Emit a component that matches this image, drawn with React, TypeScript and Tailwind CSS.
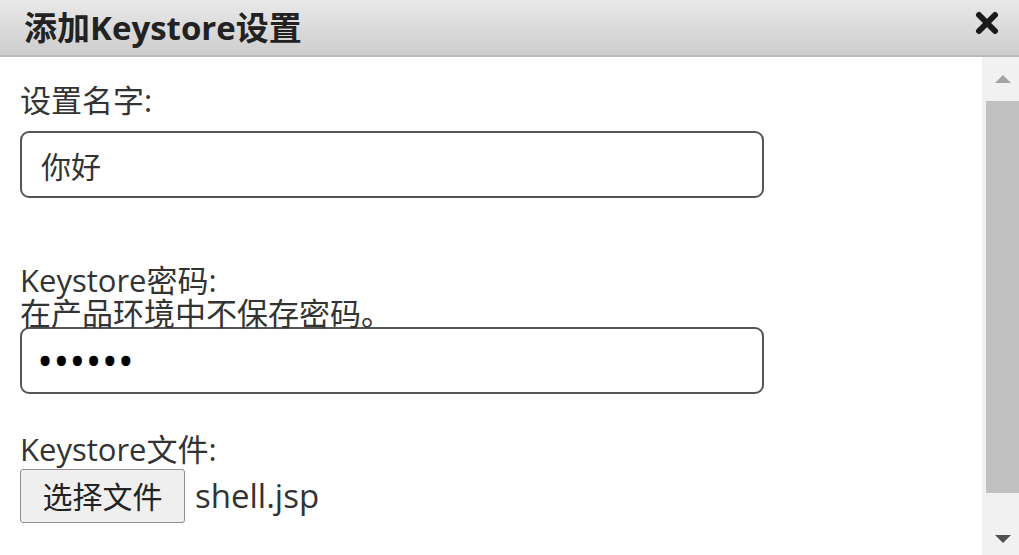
import React from 'react';

const font = "font-['Open_Sans','Noto_Sans_CJK_SC',sans-serif]";

const ScrollBar = () => {
  return (
    <div className="flex w-[37px] shrink-0 flex-col bg-[#f1f1f1]">
      <div className="flex h-[44px] items-center justify-center pl-[4px]">
        <svg width="18" height="10" viewBox="0 0 18 10">
          <polygon points="9,1 17,9 1,9" fill="#a3a3a3" />
        </svg>
      </div>
      <div className="ml-[4px] h-[392px] bg-[#c1c1c1]"></div>
      <div className="flex flex-1 items-end justify-center pb-[11px] pl-[4px]">
        <svg width="18" height="10" viewBox="0 0 18 10">
          <polygon points="1,1 17,1 9,9" fill="#505050" />
        </svg>
      </div>
    </div>
  );
};

const App = () => {
  return (
    <div className={`flex h-[555px] w-[1019px] flex-col overflow-hidden bg-white text-[#333] ${font}`}>
      <div className="flex h-[57px] shrink-0 items-center justify-between border-b-2 border-[#b9b9b9] bg-gradient-to-b from-[#e9e9e9] to-[#cdcdcd] pl-[24px] pr-[20px]">
        <h3 className="text-[33px] font-bold leading-none text-[#222]">添加Keystore设置</h3>
        <svg width="24" height="24" viewBox="0 0 24 24" className="-mt-[10px]">
          <path d="M4 4 L20 20 M20 4 L4 20" stroke="#1a1a1a" strokeWidth="6" strokeLinecap="round" />
        </svg>
      </div>

      <div className="flex flex-1">
        <div className="flex-1 pl-[20px] pt-[27px] text-[31px]">
          <div className="leading-[32px]">设置名字:</div>
          <input
            type="text"
            defaultValue="你好"
            className="mt-[15px] block h-[67px] w-[744px] rounded-[9px] border-2 border-[#555] px-[19px] text-[30px] text-[#333] outline-none"
          />

          <div className="mt-[66px] leading-[33px]">
            Keystore密码:
            <br />
            在产品环境中不保存密码。
          </div>
          <input
            type="password"
            defaultValue="123456"
            className="-mt-[3px] block h-[67px] w-[744px] rounded-[9px] border-2 border-[#555] px-[15px] text-[43px] text-black outline-none"
          />

          <div className="mt-[39px] leading-[32px]">Keystore文件:</div>
          <div className="mt-[4px] flex items-center gap-[10px]">
            <button className="h-[54px] w-[165px] rounded-[3px] border border-[#8f8f8f] bg-[#efefef] text-[30px] text-[#222]">
              选择文件
            </button>
            <span className="text-[33px] leading-[32px]">shell.jsp</span>
          </div>
        </div>
        <ScrollBar />
      </div>
    </div>
  );
};

export default App;
